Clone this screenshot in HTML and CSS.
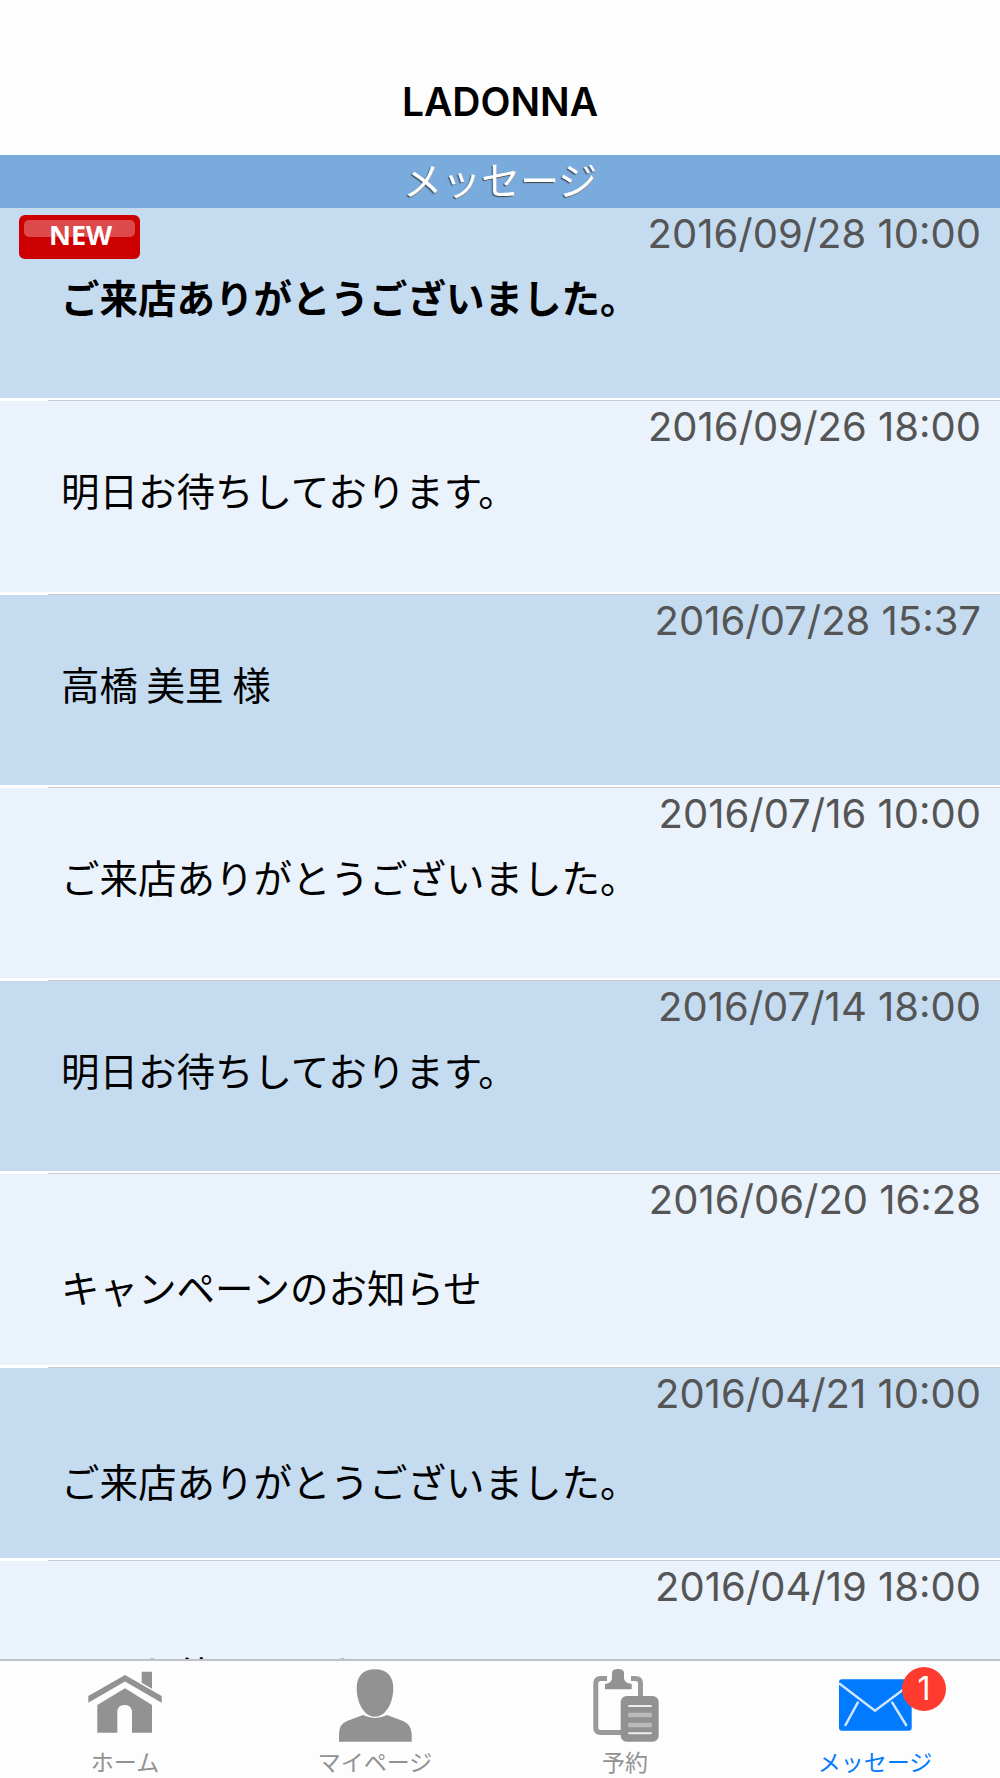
FILE: index.html
```html
<!DOCTYPE html>
<html lang="ja">
<head>
    <meta charset="UTF-8">
    <meta name="viewport" content="width=device-width, initial-scale=1.0">
    <title>LADONNA</title>
    <link rel="stylesheet" href="styles.css">
</head>
<body>

<div class="app">
    <div class="header">LADONNA</div>
    <div class="band">メッセージ</div>

    <div class="list">
        <div class="row dark unread">
            <svg class="new-badge" viewBox="0 0 121 44">
                <rect width="121" height="44" rx="6" fill="#cc0000"/>
                <rect x="5" y="5" width="111" height="17" rx="5" fill="#dc4a4c"/>
            </svg>
            <span class="new-label">NEW</span>
            <div class="date">2016/09/28 10:00</div>
            <div class="msg">ご来店ありがとうございました。</div>
        </div>
        <div class="row light">
            <div class="date">2016/09/26 18:00</div>
            <div class="msg">明日お待ちしております。</div>
        </div>
        <div class="row dark">
            <div class="date">2016/07/28 15:37</div>
            <div class="msg">高橋 美里 様</div>
        </div>
        <div class="row light">
            <div class="date">2016/07/16 10:00</div>
            <div class="msg">ご来店ありがとうございました。</div>
        </div>
        <div class="row dark">
            <div class="date">2016/07/14 18:00</div>
            <div class="msg">明日お待ちしております。</div>
        </div>
        <div class="row light low">
            <div class="date">2016/06/20 16:28</div>
            <div class="msg">キャンペーンのお知らせ</div>
        </div>
        <div class="row dark low">
            <div class="date">2016/04/21 10:00</div>
            <div class="msg">ご来店ありがとうございました。</div>
        </div>
        <div class="row light low">
            <div class="date">2016/04/19 18:00</div>
            <div class="msg">明日お待ちしております。</div>
        </div>
    </div>

    <div class="tabbar">
        <div class="tab">
            <svg class="tab-icon" viewBox="0 0 80 76">
                <path fill="#929292" d="M56.7 5.7H67v17l-10.3-6z"/>
                <path fill="#929292" d="M3.3 30 40 9l36.700 21v6.700L40 15.500 3.300 36.700z"/>
                <path fill="#929292" d="M12.300 39 40 22.300 67 39v27.700H47V47q0-8-7.500-8T32.300 47v19.700h-20z"/>
            </svg>
            <span class="tab-label">ホーム</span>
        </div>
        <div class="tab">
            <svg class="tab-icon" viewBox="0 0 80 76">
                <path fill="#929292" d="M40 3.300c12 0 18.300 7 18.300 19 0 14-7 28.400-18.300 28.400S21.700 36.300 21.700 22.300c0-12 6.300-19 18.300-19z"/>
                <path fill="#929292" d="M4 75.700V68q0-10 8-13l16-6q12 6 24 0l16 6q8 3 8.700 13v7.700z"/>
            </svg>
            <span class="tab-label">マイページ</span>
        </div>
        <div class="tab">
            <svg class="tab-icon" viewBox="0 0 80 76">
                <path fill="none" stroke="#999" stroke-width="5" d="M22 12.500H15.500q-4.700 0-4.700 4.700v44.600q0 4.700 4.700 4.700H36M46 12.500h4q5.500 0 5.500 4.700V30"/>
                <path fill="#929292" d="M27 12V7q0-4 6-4t6 4v5q0 5 7.700 6v5.300H20V18q7-1 7-6z"/>
                <rect x="35.700" y="30" width="38" height="45.700" rx="6" fill="#929292"/>
                <path fill="none" stroke="#bbb" stroke-width="4.500" d="M43.300 49h23.400M43.300 59h23.400"/>
                <path fill="none" stroke="#eee" stroke-width="2" d="M43.300 40h23.400M43.300 67.300h23.400"/>
            </svg>
            <span class="tab-label">予約</span>
        </div>
        <div class="tab active">
            <svg class="tab-icon" viewBox="0 0 80 76">
                <rect x="4" y="13.300" width="72.700" height="51.400" rx="3" fill="#007aff"/>
                <path fill="none" stroke="#cfe4fb" stroke-width="2.500" d="M4 17.300 40 44.700l36.700-27.400M23.300 35.700 10 60M56.700 35.700 71.700 60"/>
            </svg>
            <span class="tab-label">メッセージ</span>
            <span class="badge">1</span>
        </div>
    </div>
</div>

</body>
</html>
```

FILE: styles.css
```css
body {
    margin: 0;
    font-family: "Inter", "Noto Sans CJK JP", sans-serif;
    background-color: #fff;
}
.app {
    display: flex;
    flex-direction: column;
    height: 1778px;
    overflow: hidden;
}
.header {
    height: 155px;
    box-sizing: border-box;
    padding-top: 77px;
    background-color: #fdfdfd;
    text-align: center;
    font-size: 39px;
    line-height: 50px;
    font-weight: 600;
    color: #000;
}
.band {
    height: 53px;
    background-color: #79acdc;
    text-align: center;
    font-family: "Noto Sans CJK JP", sans-serif;
    font-size: 39px;
    line-height: 47px;
    color: #fff;
    text-shadow: -1px 1px 1px #444;
}
.list {
    flex: 1;
    min-height: 0;
    overflow: hidden;
}
.row {
    position: relative;
    height: 193.25px;
    box-sizing: border-box;
    padding: 0 19px 0 61px;
    border-bottom: 3px solid #fff;
    font-family: "Noto Sans CJK JP", sans-serif;
}
.row::after {
    content: "";
    position: absolute;
    left: 48px;
    right: 0;
    bottom: -3px;
    height: 1px;
    background-color: #c9c9d0;
}
.dark {
    background-color: #c5dbf0;
}
.light {
    background-color: #eaf2fb;
}
.date {
    height: 50px;
    text-align: right;
    font-family: "Inter", sans-serif;
    font-size: 40px;
    line-height: 52px;
    color: #555;
}
.msg {
    margin-top: 13px;
    font-size: 38.5px;
    line-height: 50px;
    color: #000;
}
.low .msg {
    margin-top: 37px;
}
.unread .msg {
    font-weight: 700;
}
.new-badge {
    position: absolute;
    left: 19px;
    top: 7px;
    width: 121px;
    height: 44px;
}
.new-label {
    position: absolute;
    left: 49px;
    top: 7px;
    font-family: "Open Sans", sans-serif;
    font-size: 27px;
    line-height: 40px;
    font-weight: 700;
    color: #fff;
}
.tabbar {
    display: flex;
    height: 119px;
    flex-shrink: 0;
    box-sizing: border-box;
    border-top: 2px solid #bdc3ca;
    background-color: #fdfdfd;
}
.tab {
    position: relative;
    flex: 1;
    display: flex;
    flex-direction: column;
    align-items: center;
    padding-top: 5px;
}
.tab-icon {
    width: 80px;
    height: 76px;
}
.tab-label {
    margin-top: 6px;
    font-family: "Noto Sans CJK JP", sans-serif;
    font-size: 23px;
    line-height: 26px;
    color: #929292;
}
.active .tab-label {
    color: #007aff;
}
.badge {
    position: absolute;
    left: 152px;
    top: 6px;
    width: 44px;
    height: 44px;
    border-radius: 50%;
    background-color: #ff3b30;
    color: #fff;
    text-align: center;
    font-size: 32px;
    line-height: 44px;
}
```
